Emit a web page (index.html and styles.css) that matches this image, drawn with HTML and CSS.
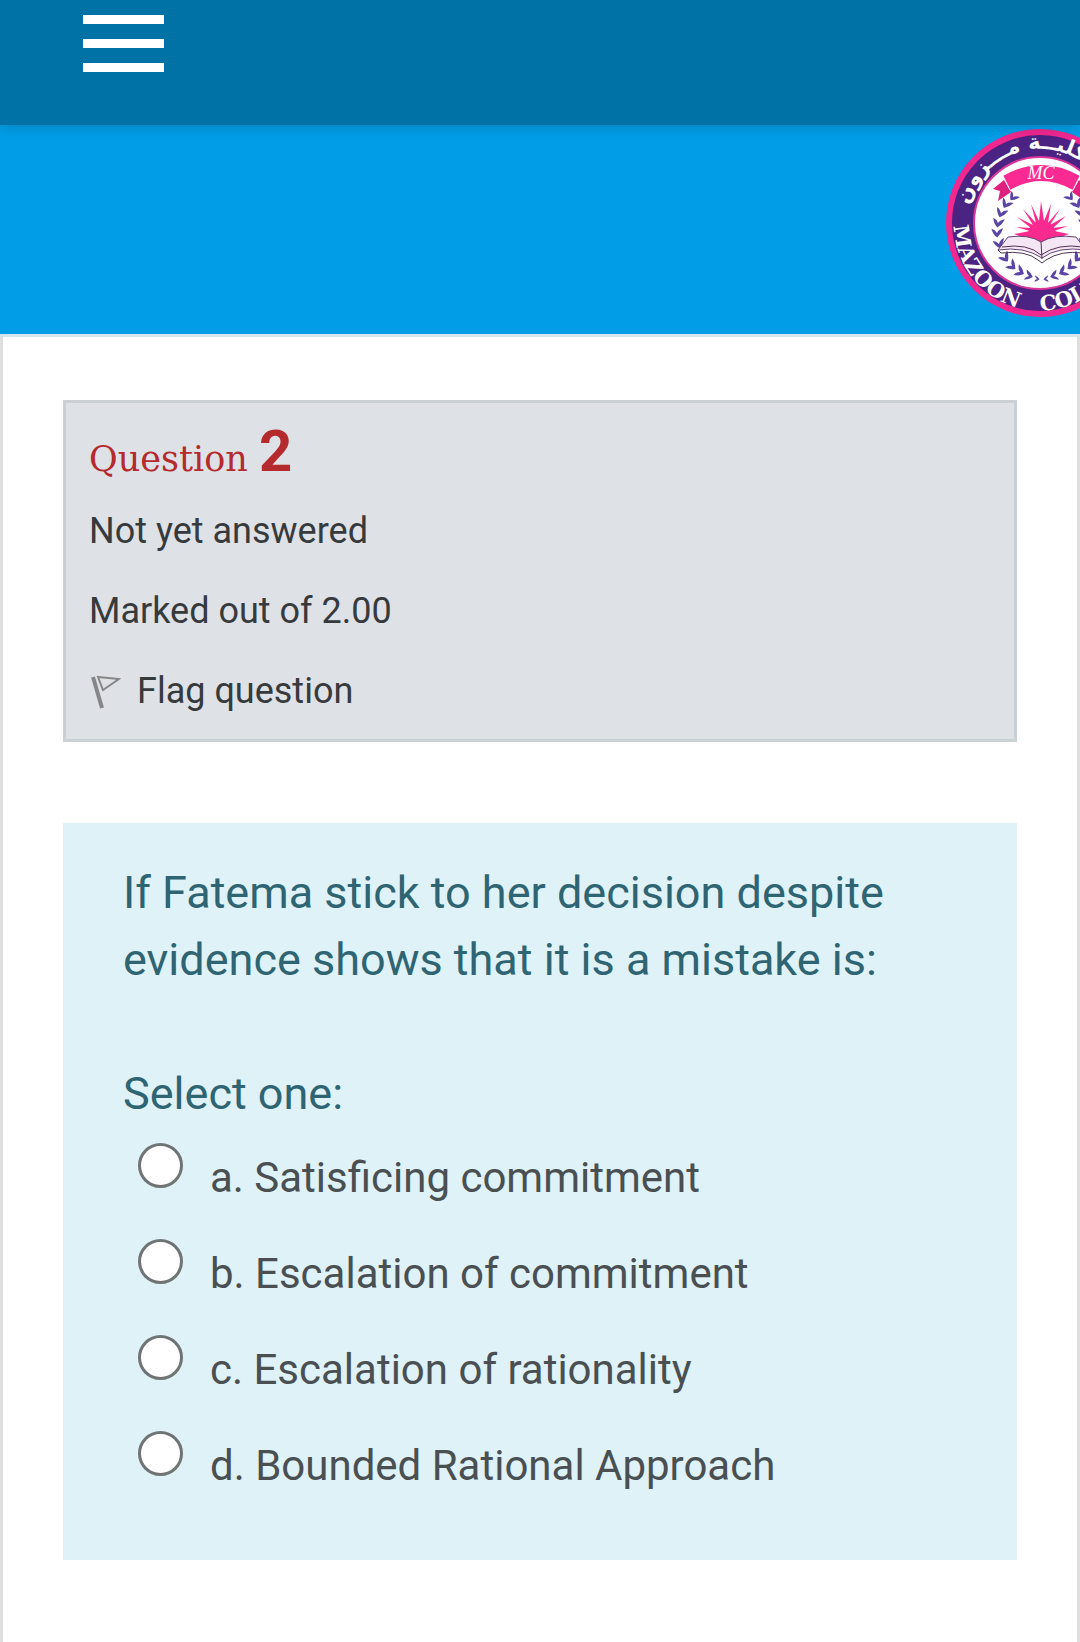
FILE: index.html
```html
<!DOCTYPE html>
<html lang="en">
<head>
<meta charset="utf-8">
<meta name="viewport" content="width=device-width">
<title>Quiz - Question 2</title>
<link rel="stylesheet" href="styles.css">
</head>
<body>
<header class="navbar">
  <button class="menu-button" type="button" aria-label="Open menu">
    <span class="menu-bar"></span>
    <span class="menu-bar"></span>
    <span class="menu-bar"></span>
  </button>
</header>
<div class="banner">
  <svg class="seal" viewBox="0 0 188 188" role="img" aria-label="Mazoon College">
    <defs>
      <path id="ring-bottom" d="M8 97A86 86 0 0 0 180 94"/>
      <path id="ring-top" d="M23 76A73 73 0 0 1 167 94"/>
      <path id="leaf" d="M-6-5Q-5 1 0 5Q5 1 7-5Q2-4 0 0Q-2-4-6-5Z"/>
      <g id="branch" fill="#5b45a5">
        <use href="#leaf" transform="translate(67 68) rotate(38) scale(.8)"/>
        <use href="#leaf" transform="translate(60 75) rotate(28) scale(.9)"/>
        <use href="#leaf" transform="translate(55 84) rotate(18) scale(.9)"/>
        <use href="#leaf" transform="translate(52 94) rotate(8) scale(.9)"/>
        <use href="#leaf" transform="translate(51 104) rotate(-2) scale(.9)"/>
        <use href="#leaf" transform="translate(53 115) rotate(-14) scale(.9)"/>
        <use href="#leaf" transform="translate(59 129) rotate(-38) scale(.9)"/>
        <use href="#leaf" transform="translate(66 137) rotate(-50) scale(.9)"/>
        <use href="#leaf" transform="translate(74 143) rotate(-62) scale(.9)"/>
        <use href="#leaf" transform="translate(83 147) rotate(-74) scale(.8)"/>
        <use href="#leaf" transform="translate(91 150) rotate(-84) scale(.5)"/>
      </g>
    </defs>
    <circle cx="94" cy="94" r="91" fill="#4a2383" stroke="#f0288f" stroke-width="6"/>
    <circle cx="94" cy="94" r="66" fill="#fff" stroke="#d9359a" stroke-width="2"/>
    <text class="seal-name"><textPath href="#ring-bottom">MAZOON</textPath></text>
    <text class="seal-name"><textPath href="#ring-bottom" startOffset="134">COLLEGE</textPath></text>
    <text class="seal-arabic" lang="ar"><textPath href="#ring-top">كليــة مـــزون</textPath></text>
    <path d="M58 51L47 60L54 62L52 72L65 63ZM133 51L144 60L137 62L139 72L126 63Z" fill="#e0207f"/>
    <path d="M57 47Q95 25 134 47L127 61Q95 43 64 61Z" fill="#fb2a93"/>
    <path d="M57 47L64 61M134 47L127 61" stroke="#fff" stroke-width="1"/>
    <text class="seal-monogram" x="95" y="50" text-anchor="middle">MC</text>
    <use href="#branch"/>
    <use href="#branch" transform="matrix(-1 0 0 1 191 0)"/>
    <path d="M68 105L84 102L70 98L85 99L71 88L87 96L77 80L90 94L85 75L93 92L95 72L98 92L105 75L102 94L114 80L104 96L120 87L107 99L122 97L108 102L123 105L109 110H82Z" fill="#fb2a8f"/>
    <circle cx="96" cy="106" r="14" fill="#fb2a8f"/>
    <path d="M62 108Q83 105 95 113Q108 105 130 108L140 121Q112 117 96 129Q78 117 52 121Z" fill="#f5e6f6" stroke="#604370" stroke-width="1"/>
    <path d="M52 121L55 124Q80 121 92 131L96 134L100 131Q115 121 137 124L140 121M95 113L96 130M56 118Q82 114 95 126Q112 114 137 118" fill="none" stroke="#513254" stroke-width="1"/>
  </svg>
</div>
<main class="page">
  <section class="info" aria-label="Question information">
    <h1 class="info-title">Question <span class="info-number">2</span></h1>
    <p class="info-row">Not yet answered</p>
    <p class="info-row">Marked out of 2.00</p>
    <a class="info-row flag-link" href="#flag">
      <svg class="flag-icon" viewBox="0 0 32 36" aria-hidden="true">
        <path d="M4 4L13 35" fill="none" stroke="#858687" stroke-width="4"/>
        <path d="M9 4L30 6L14 17Z" fill="none" stroke="#858687" stroke-width="2"/>
      </svg>
      <span>Flag question</span>
    </a>
  </section>
  <form class="question">
    <p class="question-text">If Fatema stick to her decision despite evidence shows that it is a mistake is:</p>
    <fieldset class="answers">
      <legend class="answers-prompt">Select one:</legend>
      <div class="options">
        <div class="option"><input class="option-radio" type="radio" name="answer" id="answer-a"><label class="option-label" for="answer-a">a. Satisficing commitment</label></div>
        <div class="option"><input class="option-radio" type="radio" name="answer" id="answer-b"><label class="option-label" for="answer-b">b. Escalation of commitment</label></div>
        <div class="option"><input class="option-radio" type="radio" name="answer" id="answer-c"><label class="option-label" for="answer-c">c. Escalation of rationality</label></div>
        <div class="option"><input class="option-radio" type="radio" name="answer" id="answer-d"><label class="option-label" for="answer-d">d. Bounded Rational Approach</label></div>
      </div>
    </fieldset>
  </form>
</main>
</body>
</html>
```
FILE: styles.css
```css
* {
  box-sizing: border-box;
}

body {
  display: flex;
  flex-direction: column;
  min-height: 100vh;
  margin: 0;
  background: #fff;
  font-family: Roboto, "Liberation Sans", sans-serif;
}

h1,
p {
  margin: 0;
}

.navbar {
  position: relative;
  z-index: 1;
  padding: 15px 83px 53px;
  background: #0072a6;
  box-shadow: 0 4px 12px rgba(0, 0, 0, 0.15);
}

.menu-button {
  display: flex;
  flex-direction: column;
  gap: 15px;
  width: 81px;
  padding: 0;
  border: 0;
  background: none;
}

.menu-bar {
  width: 100%;
  height: 9px;
  background: #fff;
}

.banner {
  display: flex;
  justify-content: flex-end;
  padding: 4px 0 17px;
  overflow: hidden;
  background: #019ee7;
}

.seal {
  flex: none;
  width: 188px;
  height: 188px;
  margin-right: -54px;
}

.seal-name {
  fill: #fff;
  font: bold 21px "DejaVu Serif", serif;
}

.seal-arabic {
  fill: #fff;
  font: bold 21px "DejaVu Sans", sans-serif;
}

.seal-monogram {
  fill: #fff;
  font: italic 18px "Liberation Serif", serif;
}

.page {
  flex: 1;
  padding: 63px 60px 60px;
  border: 3px solid #dfdfdf;
  border-top-color: #d5e6ec;
  border-bottom: 0;
}

.info {
  margin-bottom: 81px;
  padding: 8px 23px;
  border: 3px solid #cad0d4;
  background: #dee1e6;
  color: #373a3c;
}

.info-title {
  color: #b52a2c;
  font: 35px/40px "DejaVu Serif", serif;
}

.info-number {
  font: bold 58px/80px Roboto, sans-serif;
}

.info-row {
  font-size: 36px;
  line-height: 80px;
}

.flag-link {
  display: flex;
  align-items: center;
  gap: 16px;
  color: inherit;
  text-decoration: none;
}

.flag-icon {
  width: 32px;
  height: 36px;
}

.question {
  padding: 36px 60px 62px;
  background: #def2f8;
  color: #2f6473;
}

.question-text,
.answers-prompt {
  font-size: 45px;
  line-height: 67px;
}

.answers {
  margin: 67px 0 0;
  padding: 0;
  border: 0;
}

.answers-prompt {
  padding: 0;
}

.options {
  display: flex;
  flex-direction: column;
  gap: 29px;
  padding: 16px 0 0 15px;
}

.option {
  display: flex;
  align-items: flex-start;
  gap: 27px;
}

.option-radio {
  flex: none;
  width: 45px;
  height: 45px;
  margin: 0;
  appearance: none;
  border: 3px solid #707474;
  border-radius: 50%;
  background: #fff;
}

.option-radio:checked {
  background: radial-gradient(circle, #0075ff 50%, #fff 54%);
}

.option-label {
  padding-top: 3px;
  color: #4a4f52;
  font-size: 42px;
  line-height: 64px;
}
```
